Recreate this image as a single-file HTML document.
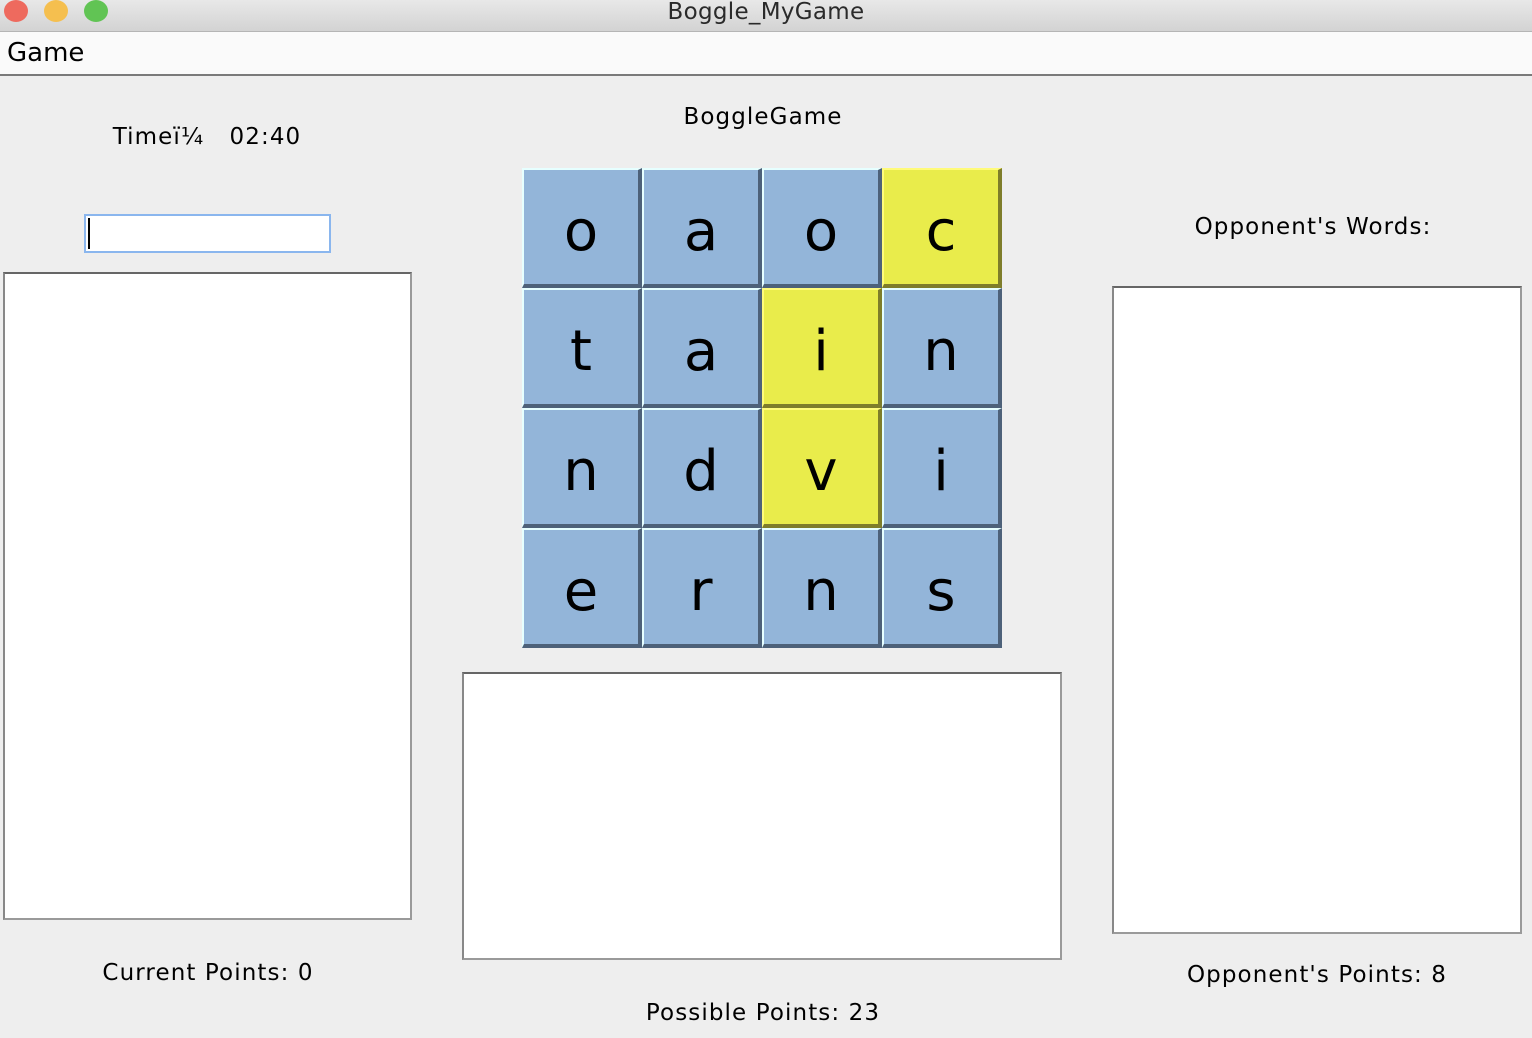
<!DOCTYPE html>
<html><head><meta charset="utf-8"><style>
*{margin:0;padding:0;box-sizing:border-box}
body{width:1532px;height:1038px;background:#eeeeee;position:relative;overflow:hidden;font-family:"DejaVu Sans","Liberation Sans",sans-serif;color:#000}
.tb{position:absolute;left:0;top:0;width:1532px;height:32px;background:linear-gradient(#e8e8e8,#d3d3d3);border-bottom:1px solid #b5b5b5}
.dot{position:absolute;top:0;width:24px;height:22px;border-radius:50%}
.tt{position:absolute;left:0;width:1532px;top:-1px;text-align:center;font-size:23px;color:#2a2a2a;letter-spacing:0.3px}
.mb{position:absolute;left:0;top:32px;width:1532px;height:44px;background:#fafafa;border-bottom:2px solid #7a7a7a}
.mb span{position:absolute;left:7px;top:6px;font-size:26px}
.lbl{position:absolute;text-align:center;font-size:23px;white-space:pre;line-height:30px;letter-spacing:1.1px}
.box{position:absolute;background:#fff;border:2px solid #9a9a9a;border-top-color:#666;border-left-color:#888}
.cell{position:absolute;width:120px;height:120px;background:#93b5d9;border-top:2px solid #e6ffff;border-left:2px solid #e6ffff;border-right:4px solid #4d6179;border-bottom:4px solid #4d6179;text-align:center;font-size:56px;line-height:124px}
.y{background:#e9ec4b;border-top-color:#fffb7a;border-left-color:#fffb7a;border-right-color:#7e7d2a;border-bottom-color:#7e7d2a}
</style></head><body>
<div class="tb">
<div class="dot" style="left:4px;background:#ee6a5e"></div>
<div class="dot" style="left:44px;background:#f5bf4f"></div>
<div class="dot" style="left:84px;background:#61c454"></div>
<div class="tt">Boggle_MyGame</div>
</div>
<div class="mb"><span>Game</span></div>

<div class="lbl" style="left:0;width:414px;top:122px">Timeï¼   02:40</div>
<div style="position:absolute;left:84px;top:214px;width:247px;height:39px;background:#fff;border:2px solid #8ab6ee"></div>
<div style="position:absolute;left:88px;top:218px;width:2px;height:31px;background:#000"></div>
<div class="box" style="left:3px;top:272px;width:409px;height:648px"></div>
<div class="lbl" style="left:0;width:416px;top:958px">Current Points: 0</div>

<div class="lbl" style="left:463px;width:600px;top:102px">BoggleGame</div>
<div class="cell" style="left:522px;top:168px">o</div>
<div class="cell" style="left:642px;top:168px">a</div>
<div class="cell" style="left:762px;top:168px">o</div>
<div class="cell y" style="left:882px;top:168px">c</div>
<div class="cell" style="left:522px;top:288px">t</div>
<div class="cell" style="left:642px;top:288px">a</div>
<div class="cell y" style="left:762px;top:288px">i</div>
<div class="cell" style="left:882px;top:288px">n</div>
<div class="cell" style="left:522px;top:408px">n</div>
<div class="cell" style="left:642px;top:408px">d</div>
<div class="cell y" style="left:762px;top:408px">v</div>
<div class="cell" style="left:882px;top:408px">i</div>
<div class="cell" style="left:522px;top:528px">e</div>
<div class="cell" style="left:642px;top:528px">r</div>
<div class="cell" style="left:762px;top:528px">n</div>
<div class="cell" style="left:882px;top:528px">s</div>
<div class="box" style="left:462px;top:672px;width:600px;height:288px"></div>
<div class="lbl" style="left:463px;width:600px;top:998px">Possible Points: 23</div>

<div class="lbl" style="left:1112px;width:402px;top:212px">Opponent's Words:</div>
<div class="box" style="left:1112px;top:286px;width:410px;height:648px"></div>
<div class="lbl" style="left:1112px;width:410px;top:960px">Opponent's Points: 8</div>
</body></html>
